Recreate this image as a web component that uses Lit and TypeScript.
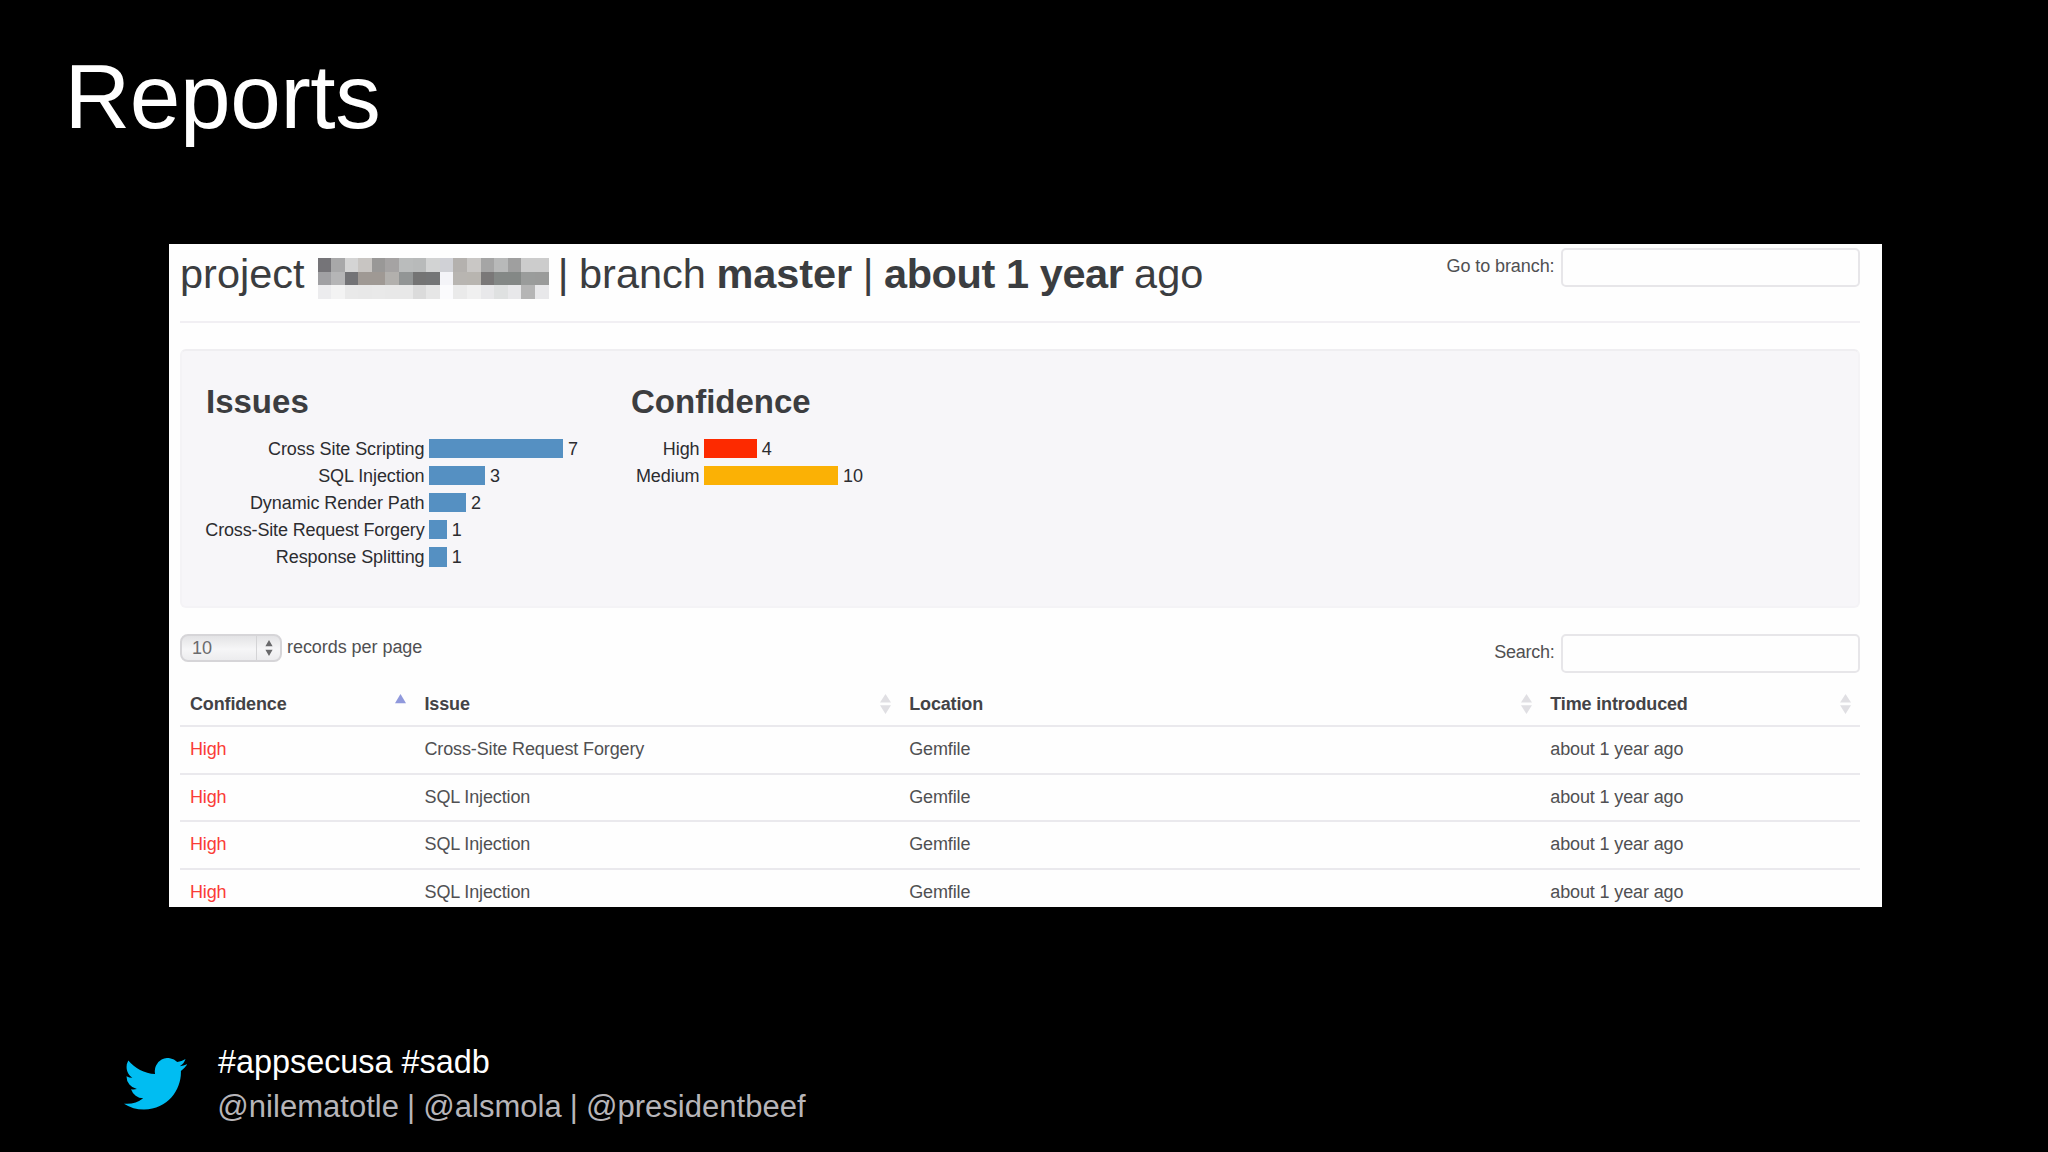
import { LitElement, html, css, svg } from "lit";
import { customElement, property } from "lit/decorators.js";

interface Bar {
  label: string;
  value: number;
  width: number;
  color: string;
}

const ISSUES: Bar[] = [
  { label: "Cross Site Scripting", value: 7, width: 134, color: "#5590c2" },
  { label: "SQL Injection", value: 3, width: 56, color: "#5590c2" },
  { label: "Dynamic Render Path", value: 2, width: 37, color: "#5590c2" },
  { label: "Cross-Site Request Forgery", value: 1, width: 17.7, color: "#5590c2" },
  { label: "Response Splitting", value: 1, width: 17.7, color: "#5590c2" },
];

const CONFIDENCE: Bar[] = [
  { label: "High", value: 4, width: 52.7, color: "#fd2a00" },
  { label: "Medium", value: 10, width: 134, color: "#fbb105" },
];

const ROWS = [
  ["High", "Cross-Site Request Forgery", "Gemfile", "about 1 year ago"],
  ["High", "SQL Injection", "Gemfile", "about 1 year ago"],
  ["High", "SQL Injection", "Gemfile", "about 1 year ago"],
  ["High", "SQL Injection", "Gemfile", "about 1 year ago"],
];

// Pixelated block that hides the project name.
const MOSAIC = [
  ["#757478", "#a8a8a9", "#d4d4d4", "#c8c5c2", "#999897", "#a5a3a3", "#babcbc", "#b8baba", "#d2d3d3", "#d0d1d6", "#b4b1ae", "#c9c7c5", "#a5a5a5", "#b8b9b9", "#9f9f9f", "#cccccc", "#cccccc"],
  ["#a0a0a3", "#b5b5b6", "#737376", "#9f9994", "#9f9994", "#b2b0ad", "#929595", "#747474", "#747576", "#f4f4f8", "#b8b5b1", "#b8b5b0", "#7a7878", "#848886", "#848886", "#9a9c9b", "#9a9b9a"],
  ["#ececee", "#f3f3f3", "#e9e9e9", "#e8e8e8", "#e9e9e9", "#e8e8e8", "#e8e8e8", "#dbdbdb", "#e6e6e6", "#fbfbfd", "#eaeaea", "#f0f0f0", "#e8e8ea", "#dfe1e1", "#e8e8ea", "#b5b5b5", "#e8e8ea"],
];

@customElement("bar-chart")
export class BarChart extends LitElement {
  @property() heading = "";
  @property({ attribute: false }) bars: Bar[] = [];

  static styles = css`
    :host { display: block; }
    .title {
      margin: 0 0 17px;
      padding-top: 1px;
      font-size: 33px;
      line-height: 40px;
      font-weight: 700;
      color: #3c3d40;
    }
    .rows { display: flex; flex-direction: column; gap: 7.9px; }
    .row { display: flex; align-items: center; height: 19.2px; }
    .label {
      width: var(--label-width);
      display: flex;
      justify-content: flex-end;
      margin-right: 4.5px;
      padding-top: 1.6px;
      font-size: 18px;
      line-height: 19px;
      letter-spacing: -0.08px;
      white-space: nowrap;
      color: #2c2c30;
    }
    .long { letter-spacing: -0.15px; }
    .bar { height: 19.2px; margin-right: 5px; }
    .value { padding-top: 1.6px; font-size: 18px; line-height: 19px; color: #2c2c30; }
  `;

  render() {
    return html`
      <h3 class="title">${this.heading}</h3>
      <div class="rows">
        ${this.bars.map(
          (b) => html`
            <div class="row">
              <span class="label ${b.label.length > 22 ? "long" : ""}">${b.label}</span>
              <span class="bar" style="width:${b.width}px;background:${b.color}"></span>
              <span class="value">${b.value}</span>
            </div>
          `
        )}
      </div>
    `;
  }
}

@customElement("app-root")
export class AppRoot extends LitElement {
  static styles = css`
    :host {
      display: block;
      font-family: "Liberation Sans", Arial, Helvetica, sans-serif;
    }
    .slide {
      box-sizing: border-box;
      width: 2048px;
      height: 1152px;
      padding-top: 47px;
      background: #000;
      overflow: hidden;
    }
    .slide-title {
      margin: 0;
      padding-left: 64.5px;
      font-size: 91px;
      line-height: 100px;
      font-weight: 400;
      letter-spacing: -0.4px;
      color: #fff;
    }
    .panel {
      box-sizing: border-box;
      width: 1713px;
      height: 663px;
      margin: 97px 0 0 168.5px;
      padding: 0 22px 0 11.5px;
      overflow: hidden;
      background: #fefefe;
      color: #505052;
      font-size: 18px;
    }
    .head {
      box-sizing: border-box;
      display: flex;
      justify-content: space-between;
      align-items: flex-start;
      height: 79px;
      padding-top: 4px;
      border-bottom: 2px solid #f1eff3;
    }
    .project {
      display: flex;
      gap: 10.6px;
      margin: 0;
      padding-top: 1px;
      font-size: 41.5px;
      line-height: 50px;
      font-weight: 400;
      white-space: nowrap;
      color: #3b3d40;
    }
    .strong { font-weight: 700; letter-spacing: -0.1px; }
    .when { letter-spacing: -0.42px; }
    .mosaic {
      display: grid;
      grid-template-columns: repeat(17, 1fr);
      width: 231px;
      height: 40.5px;
      margin: 9px -1.5px 0 2.4px;
    }
    .field { display: flex; align-items: center; gap: 6px; }
    .field-label { line-height: 24px; padding-bottom: 2.4px; letter-spacing: -0.08px; }
    .narrow { letter-spacing: -0.25px; }
    .input {
      box-sizing: border-box;
      width: 299px;
      height: 39px;
      border: 2px solid #e7e6e9;
      border-radius: 5px;
      background: #fefefe;
    }
    .well {
      box-sizing: border-box;
      display: flex;
      height: 259px;
      margin-top: 26px;
      padding: 30px 24px;
      border: 2px solid #f4f3f6;
      border-top-color: #efeef1;
      border-radius: 6px;
      background: #f7f6f9;
    }
    .issues { width: 425px; --label-width: 218.5px; }
    .confidence { --label-width: 68.5px; }
    .tools {
      display: flex;
      justify-content: space-between;
      align-items: flex-start;
      height: 39px;
      margin-top: 26px;
    }
    .pager { display: flex; align-items: flex-start; gap: 5px; }
    .pager-text { padding-top: 1px; line-height: 25px; letter-spacing: -0.05px; }
    .select {
      box-sizing: border-box;
      display: flex;
      width: 102px;
      height: 28px;
      border: 2px solid #d6d5d8;
      border-radius: 8px;
      background: linear-gradient(#e3e3e5, #f6f6f7 55%, #ececee);
    }
    .select-value { flex: 1; padding-left: 10px; line-height: 25px; color: #6b6b6d; }
    .select-arrows {
      display: flex;
      align-items: center;
      width: 24px;
      padding-left: 7.5px;
      box-sizing: border-box;
      border-left: 1px solid #d4d4d6;
    }
    .line {
      display: grid;
      grid-template-columns: 234.5px 484.7px 641.1px 319.7px;
    }
    .thead {
      height: 45.4px;
      margin-top: 7px;
      font-weight: 700;
      letter-spacing: -0.15px;
      color: #434346;
    }
    .tr {
      box-sizing: border-box;
      height: 47.4px;
      border-top: 2px solid #eae9ed;
      letter-spacing: -0.13px;
    }
    .cell {
      display: flex;
      justify-content: space-between;
      padding: 0 8.5px 0 10px;
      line-height: 45.5px;
      white-space: nowrap;
    }
    .thead .cell { line-height: 48px; }
    .thead svg { margin-top: 14px; }
    .high { color: #fa3c36; }
    .footer {
      display: flex;
      margin-top: 133px;
      padding-left: 124px;
    }
    .bird { display: block; margin: 18.2px 30.5px 0 0; }
    .credit { line-height: 44.5px; white-space: nowrap; }
    .tags { font-size: 32.4px; color: #fff; }
    .people {
      margin-left: -0.6px;
      font-size: 31px;
      letter-spacing: 0.03px;
      word-spacing: -0.6px;
      color: #b7b5b9;
    }
  `;

  private sortIcon(asc: boolean) {
    return html`<svg width="11" height="20" viewBox="0 0 11 20">
      ${asc
        ? svg`<path d="M5.5 0 L11 9.3 H0 Z" fill="#9099dc" />`
        : svg`<path d="M5.5 0 L11 8.6 H0 Z M0 11.2 H11 L5.5 20 Z" fill="#e0dfe3" />`}
    </svg>`;
  }

  render() {
    const heads = ["Confidence", "Issue", "Location", "Time introduced"];
    return html`
      <main class="slide">
        <h1 class="slide-title">Reports</h1>
        <section class="panel">
          <header class="head">
            <h2 class="project">
              <span>project</span>
              <span class="mosaic">
                ${MOSAIC.flat().map((c) => html`<i style="background:${c}"></i>`)}
              </span>
              <span>|</span>
              <span>branch</span>
              <span class="strong">master</span>
              <span>|</span>
              <span class="strong when">about 1 year</span>
              <span>ago</span>
            </h2>
            <div class="field">
              <span class="field-label">Go to branch:</span>
              <span class="input"></span>
            </div>
          </header>
          <div class="well">
            <bar-chart class="issues" heading="Issues" .bars=${ISSUES}></bar-chart>
            <bar-chart class="confidence" heading="Confidence" .bars=${CONFIDENCE}></bar-chart>
          </div>
          <div class="tools">
            <div class="pager">
              <span class="select">
                <span class="select-value">10</span>
                <span class="select-arrows">
                  <svg width="8" height="16" viewBox="0 0 8 16">
                    <path d="M4 0 L7.6 6.2 H0.4 Z M0.4 9.8 H7.6 L4 16 Z" fill="#69696b" />
                  </svg>
                </span>
              </span>
              <span class="pager-text">records per page</span>
            </div>
            <div class="field">
              <span class="field-label narrow">Search:</span>
              <span class="input"></span>
            </div>
          </div>
          <div class="line thead">
            ${heads.map((h, i) => html`<div class="cell">${h}${this.sortIcon(i === 0)}</div>`)}
          </div>
          ${ROWS.map(
            (r) => html`<div class="line tr">
              ${r.map((c, i) => html`<div class="cell ${i === 0 ? "high" : ""}">${c}</div>`)}
            </div>`
          )}
        </section>
        <footer class="footer">
          <svg class="bird" width="63.4" height="51.5" viewBox="0 2.25 24 19.5">
            <path
              fill="#00bdf2"
              d="M23.953 4.57a10 10 0 01-2.825.775 4.958 4.958 0 002.163-2.723c-.951.555-2.005.959-3.127 1.184a4.92 4.92 0 00-8.384 4.482C7.69 8.095 4.067 6.13 1.64 3.162a4.822 4.822 0 00-.666 2.475c0 1.71.87 3.213 2.188 4.096a4.904 4.904 0 01-2.228-.616v.06a4.923 4.923 0 003.946 4.827 4.996 4.996 0 01-2.212.085 4.936 4.936 0 004.604 3.417 9.867 9.867 0 01-6.102 2.105c-.39 0-.779-.023-1.17-.067a13.995 13.995 0 007.557 2.209c9.053 0 13.998-7.496 13.998-13.985 0-.21 0-.42-.015-.63A9.935 9.935 0 0024 4.59z"
            />
          </svg>
          <div class="credit">
            <div class="tags">#appsecusa #sadb</div>
            <div class="people">@nilematotle | @alsmola | @presidentbeef</div>
          </div>
        </footer>
      </main>
    `;
  }
}
